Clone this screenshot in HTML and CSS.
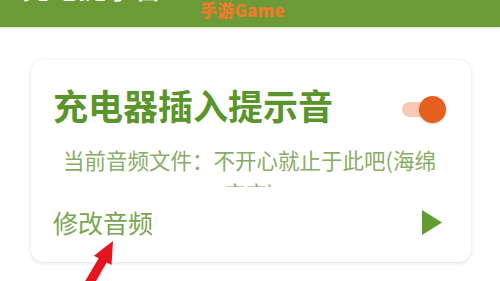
FILE: index.html
```html
<!DOCTYPE html>
<html lang="zh-CN">
<head>
<meta charset="utf-8">
<title>充电提示音</title>
<link rel="stylesheet" href="styles.css">
</head>
<body>
<header class="appbar">
  <h1 class="appbar-title">充电提示音</h1>
</header>
<div class="watermark">手游Game</div>
<main class="content">
  <section class="card">
    <div class="card-head">
      <h2 class="card-title">充电器插入提示音</h2>
      <div class="switch"><span class="switch-track"></span><span class="switch-thumb"></span></div>
    </div>
    <p class="card-file">当前音频文件：不开心就止于此吧(海绵宝宝)</p>
    <div class="card-action">
      <span class="action-label">修改音频</span>
      <svg class="play" width="20" height="25" viewBox="0 0 20 25"><polygon points="0,0 20,12.5 0,25" fill="#5f9d33"/></svg>
    </div>
  </section>
</main>
<svg class="arrow" width="500" height="281" viewBox="0 0 500 281">
  <polygon points="113,241 111.5,265 106.7,262.5 92,288 84,283 98.7,258.3 93.9,255.7" fill="#e5141d"/>
</svg>
</body>
</html>
```

FILE: styles.css
```css
* { box-sizing: border-box; }
html, body {
  margin: 0;
  padding: 0;
  background: #ffffff;
  width: 500px;
  height: 281px;
  overflow: hidden;
  font-family: "Noto Sans CJK SC", "Noto Sans", sans-serif;
}
.appbar {
  height: 27px;
  background: #6b9a36;
  display: flex;
  align-items: flex-end;
  overflow: hidden;
  padding: 0 0 26px 22px;
  box-shadow: 0 1px 2px rgba(120, 170, 80, 0.35);
  position: relative;
  z-index: 1;
}
.appbar-title {
  margin: 0;
  color: #ffffff;
  font-size: 28px;
  line-height: 1;
  font-weight: 500;
  flex: none;
}
.watermark {
  position: absolute;
  left: 200px;
  top: 0;
  z-index: 2;
  color: #f27a2b;
  font-size: 17px;
  font-weight: 900;
  line-height: 20px;
  letter-spacing: 0.2px;
}
.content {
  padding: 33px 0 0 31px;
}
.card {
  width: 440px;
  height: 202px;
  border-radius: 12px;
  background: #ffffff;
  box-shadow: 0 1px 4px rgba(0, 0, 0, 0.12), 0 0 1px rgba(0, 0, 0, 0.1);
  padding: 25px 25px 0 22px;
  display: flex;
  flex-direction: column;
}
.card-head {
  display: flex;
  align-items: center;
  justify-content: space-between;
  height: 40px;
}
.card-title {
  margin: 0;
  font-size: 35px;
  line-height: 40px;
  font-weight: 700;
  color: #5a952b;
}
.switch {
  position: relative;
  width: 44px;
  height: 26px;
  margin-top: 8px;
}
.switch-track {
  position: absolute;
  left: 0;
  top: 6px;
  width: 40px;
  height: 15px;
  border-radius: 8px;
  background: #f7c8b4;
}
.switch-thumb {
  position: absolute;
  right: 0;
  top: 0;
  width: 27px;
  height: 27px;
  border-radius: 50%;
  background: #e65f1e;
  box-shadow: 0 1px 2px rgba(0, 0, 0, 0.2);
}
.card-file {
  margin: 18px 0 0 0;
  padding: 0 8px;
  height: 44px;
  overflow: hidden;
  font-size: 21.5px;
  line-height: 33px;
  color: #86ad63;
  text-align: center;
}
.card-action {
  margin-top: 18px;
  display: flex;
  align-items: center;
  justify-content: space-between;
  height: 34px;
}
.action-label {
  font-size: 25px;
  line-height: 34px;
  color: #78a64f;
}
.play {
  display: block;
  margin-right: 4px;
}
.arrow {
  position: absolute;
  left: 0;
  top: 0;
  z-index: 3;
}
```
